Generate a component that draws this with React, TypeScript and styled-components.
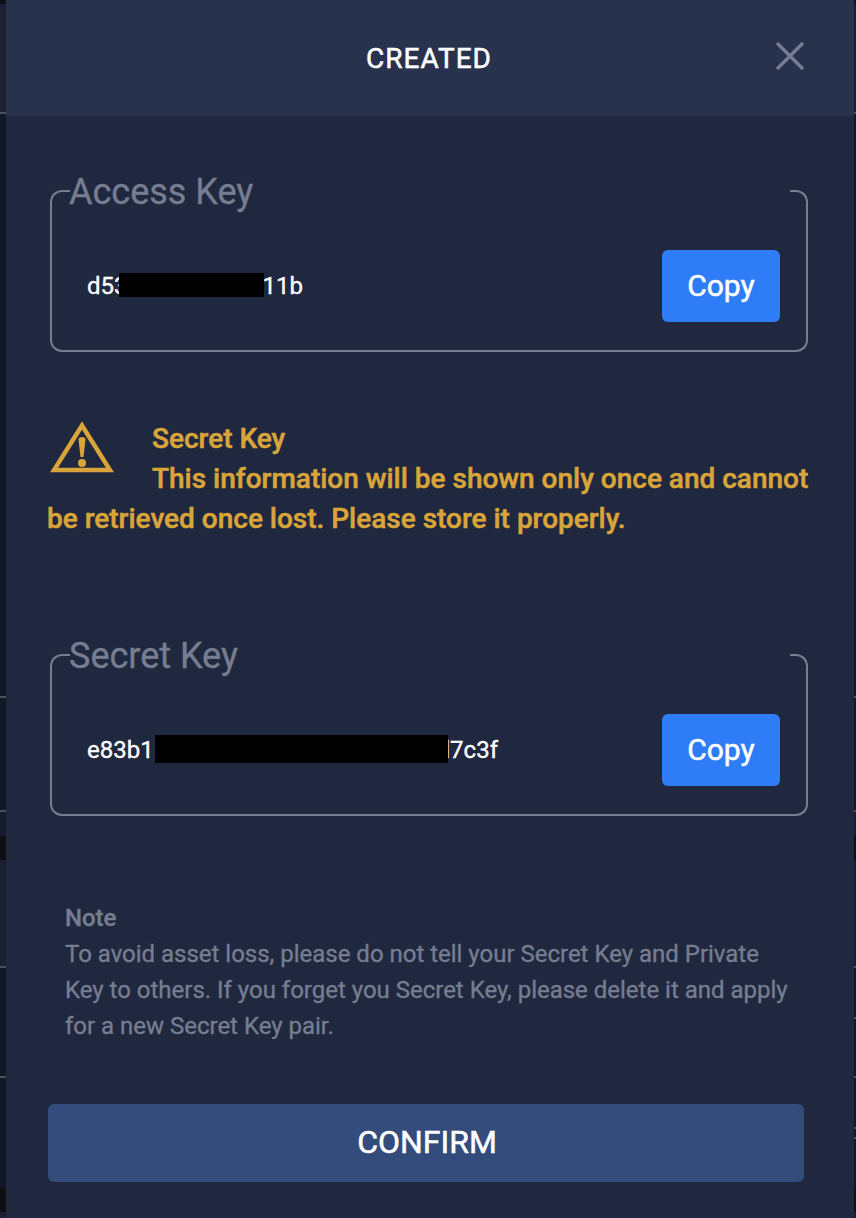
import React from "react";
import styled, { createGlobalStyle } from "styled-components";

const GlobalStyle = createGlobalStyle`
  * { box-sizing: border-box; }
  body { margin: 0; background: #111827; font-family: Roboto, "Liberation Sans", sans-serif; }
`;

const Page = styled.div`
  display: flex;
  width: 856px;
  height: 1218px;
  overflow: hidden;
  -webkit-text-stroke: 0.35px currentColor;
`;

const Gutter = styled.div<{ $width: number }>`
  display: flex;
  flex-direction: column;
  flex: 0 0 ${(p) => p.$width}px;
`;

const Band = styled.div<{ $height: number; $color: string }>`
  flex: 0 0 ${(p) => p.$height}px;
  background: ${(p) => p.$color};
`;

const Dialog = styled.section`
  display: flex;
  flex-direction: column;
  flex: 0 0 848px;
  background: #20283f;
`;

const Header = styled.header`
  display: grid;
  grid-template-columns: 1fr auto 1fr;
  align-items: center;
  height: 116px;
  padding: 0 48px 2px 44px;
  background: #29324d;
`;

const Title = styled.h1`
  grid-column: 2;
  margin: 3px 0 0 2px;
  font-size: 28px;
  font-weight: 400;
  line-height: 36px;
  letter-spacing: 1px;
  color: #fff;
  -webkit-text-stroke: 0.5px #fff;
`;

const CloseButton = styled.button`
  justify-self: end;
  display: flex;
  margin-bottom: 2px;
  padding: 0;
  border: 0;
  background: none;
  color: #767d91;
`;

const Body = styled.div`
  display: flex;
  flex-direction: column;
  padding: 74px 46px 0 44px;
`;

const Frame = styled.div`
  display: flex;
  flex-direction: column;
  height: 162px;
`;

const FrameTop = styled.div`
  display: flex;
  height: 14px;
`;

const Corner = styled.span<{ $side: "left" | "right" }>`
  width: ${(p) => (p.$side === "left" ? 20 : 18)}px;
  border-top: 2px solid #767d91;
  border-${(p) => p.$side}: 2px solid #767d91;
  border-top-${(p) => p.$side}-radius: 12px;
`;

const Legend = styled.span`
  flex: 1;
  margin-left: -1px;
  font-size: 36px;
  line-height: 4px;
  color: #767d91;
`;

const FrameBody = styled.div`
  display: flex;
  flex: 1;
  align-items: center;
  justify-content: space-between;
  padding: 18px 26px 0 35px;
  border: 2px solid #767d91;
  border-top: 0;
  border-radius: 0 0 12px 12px;
`;

const KeyValue = styled.span`
  display: flex;
  align-items: center;
  height: 28px;
  font-size: 24px;
  color: #fff;
`;

const KeyPart = styled.span<{ $width: number; $end?: boolean }>`
  display: flex;
  justify-content: ${(p) => (p.$end ? "flex-end" : "flex-start")};
  width: ${(p) => p.$width}px;
  line-height: 28px;
`;

const Redaction = styled.span<{ $width: number; $height: number }>`
  position: relative;
  z-index: 1;
  width: ${(p) => p.$width}px;
  height: ${(p) => p.$height}px;
  margin-top: -3px;
  background: #000;
`;

const CopyButton = styled.button`
  width: 118px;
  height: 72px;
  padding: 0;
  border: 0;
  border-radius: 6px;
  background: #2f7df6;
  color: #fff;
  font: 400 30px/72px Roboto, sans-serif;
  -webkit-text-stroke: 0.5px #fff;
`;

const Warning = styled.div`
  height: 302px;
  margin: 0 -6px 0 -3px;
  padding-top: 67px;
  color: #d9a53a;
  font-size: 28px;
  font-weight: 500;
  line-height: 40px;
  letter-spacing: -0.01px;
  -webkit-text-stroke-width: 0.5px;
`;

const WarningIcon = styled.svg`
  float: left;
  width: 64px;
  height: 52px;
  margin: 2px 38px 0 3px;
`;

const Note = styled.div`
  width: 740px;
  height: 144px;
  margin: 84px 0 60px 15px;
  padding-right: 10px;
  font-size: 24px;
  line-height: 36px;
  letter-spacing: -0.01px;
  color: #767d91;
`;

const NoteTitle = styled.div`
  font-weight: 500;
`;

const ConfirmButton = styled.button`
  width: 756px;
  height: 78px;
  margin-left: -2px;
  padding: 0 0 2px 2px;
  border: 0;
  border-radius: 6px;
  background: #334c7b;
  color: #fff;
  font: 400 32px/76px Roboto, sans-serif;
  -webkit-text-stroke: 0.5px #fff;
`;

const LINE = "#4b505d";
const DARK = "#111724";

const leftBands: [number, string][] = [
  [4, "#0c1119"], [108, "#1d2033"], [2, LINE], [582, DARK], [2, LINE], [112, DARK], [2, LINE],
  [24, "#161c2b"], [24, "#0c1015"], [106, "#1a2031"], [2, LINE], [108, DARK], [2, LINE],
  [110, DARK], [24, "#0c1015"], [6, "#1a2031"],
];

const rightBands: [number, string][] = [
  [4, "#0c1119"], [108, "#181d30"], [2, LINE], [582, DARK], [2, LINE], [112, DARK], [2, LINE],
  [24, "#182030"], [24, "#0c1015"], [106, "#182030"], [2, LINE], [49, DARK], [2, LINE],
  [57, DARK], [2, LINE], [49, DARK], [2, LINE], [8, DARK], [2, LINE], [49, DARK],
  [24, "#0c1015"], [6, "#1a2031"],
];

function Backdrop({ width, bands }: { width: number; bands: [number, string][] }) {
  return (
    <Gutter $width={width}>
      {bands.map(([height, color], i) => (
        <Band key={i} $height={height} $color={color} />
      ))}
    </Gutter>
  );
}

function KeyFrame({ label, children }: { label: string; children: React.ReactNode }) {
  return (
    <Frame>
      <FrameTop>
        <Corner $side="left" />
        <Legend>{label}</Legend>
        <Corner $side="right" />
      </FrameTop>
      <FrameBody>
        <KeyValue>{children}</KeyValue>
        <CopyButton>Copy</CopyButton>
      </FrameBody>
    </Frame>
  );
}

export default function App() {
  return (
    <>
      <GlobalStyle />
      <Page>
        <Backdrop width={6} bands={leftBands} />
        <Dialog>
          <Header>
            <Title>CREATED</Title>
            <CloseButton aria-label="Close">
              <svg width="32" height="32" viewBox="0 0 32 32" fill="none" stroke="currentColor" strokeWidth="3.4">
                <path d="M3 3 29 29M29 3 3 29" />
              </svg>
            </CloseButton>
          </Header>
          <Body>
            <KeyFrame label="Access Key">
              <KeyPart $width={32}>d53</KeyPart>
              <Redaction $width={145} $height={24} />
              <KeyPart $width={39} $end>11b</KeyPart>
            </KeyFrame>
            <Warning>
              <WarningIcon viewBox="0 0 64 52">
                <path d="M32 4.500 60 49H4Z" fill="none" stroke="currentColor" strokeWidth="4.4" />
                <path d="M28.500 18.500Q28.500 16 32 16t3.500 2.500L33.500 36h-3Z" fill="currentColor" />
                <circle cx="32" cy="42" r="4" fill="currentColor" />
              </WarningIcon>
              Secret Key
              <br />
              This information will be shown only once and cannot be retrieved once lost. Please store it properly.
            </Warning>
            <KeyFrame label="Secret Key">
              <KeyPart $width={68}>e83b1</KeyPart>
              <Redaction $width={293} $height={28} />
              <KeyPart $width={50} $end>d7c3f</KeyPart>
            </KeyFrame>
            <Note>
              <NoteTitle>Note</NoteTitle>
              To avoid asset loss, please do not tell your Secret Key and Private Key to others. If you forget you
              Secret Key, please delete it and apply for a new Secret Key pair.
            </Note>
            <ConfirmButton>CONFIRM</ConfirmButton>
          </Body>
        </Dialog>
        <Backdrop width={2} bands={rightBands} />
      </Page>
    </>
  );
}
